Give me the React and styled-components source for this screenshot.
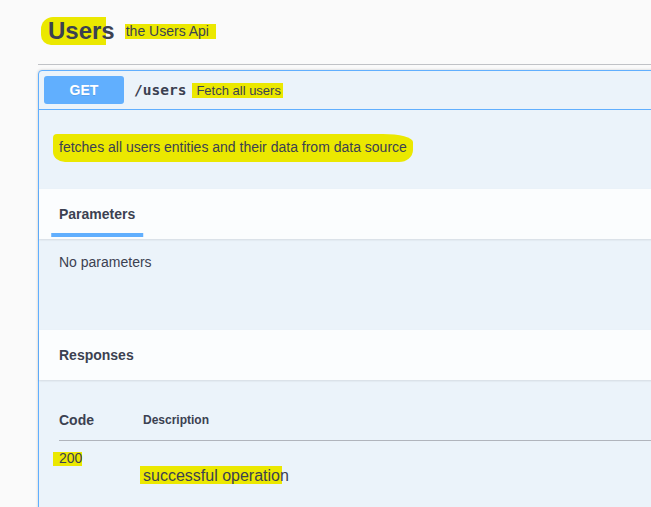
import styled, { createGlobalStyle } from 'styled-components';

const GlobalStyle = createGlobalStyle`
  html, body {
    margin: 0;
    padding: 0;
    background: #fafafa;
    overflow: hidden;
  }
  body {
    font-family: "Liberation Sans", Arial, sans-serif;
    color: #3b4151;
  }
`;

const HL = '#ebe800';

const Page = styled.div`
  width: 1400px;
  padding: 0 0 0 38px;
`;

const TagHeading = styled.h4`
  display: flex;
  align-items: center;
  margin: 0 0 5px;
  padding: 17px 20px 19px 10px;
  border-bottom: 1px solid rgba(59, 65, 81, 0.3);
  font-size: 24px;
  line-height: 28px;
  font-weight: 700;
`;

const TagName = styled.span`
  margin-left: -7px;
  padding-left: 7px;
  background: linear-gradient(${HL}, ${HL}) no-repeat left center;
  background-size: 88% 100%;
  border-radius: 12px 6px 4px 10px;
`;

const TagDesc = styled.small`
  font-size: 14px;
  font-weight: 400;
  line-height: 15px;
  margin-left: 10px;
  padding: 0 7px 0 1px;
  background: ${HL};
`;

const OpBlock = styled.div`
  border: 1px solid #61affe;
  border-radius: 4px;
  background: #ebf3fa;
  box-shadow: 0 0 3px rgba(0, 0, 0, 0.19);
`;

const Summary = styled.div`
  display: flex;
  align-items: center;
  padding: 5px;
  border-bottom: 1px solid #61affe;
`;

const Method = styled.span`
  display: inline-block;
  min-width: 80px;
  height: 28px;
  line-height: 28px;
  box-sizing: border-box;
  text-align: center;
  border-radius: 3px;
  background: #61affe;
  color: #fff;
  font-size: 14px;
  font-weight: 700;
  text-shadow: 0 1px 0 rgba(0, 0, 0, 0.1);
`;

const Path = styled.span`
  padding: 0 0 0 10px;
  font-family: "DejaVu Sans Mono", "Liberation Mono", monospace;
  font-size: 14.5px;
  font-weight: 700;
`;

const SummaryText = styled.span`
  margin-left: 6px;
  padding: 0 2px 0 4px;
  font-size: 13px;
  line-height: 15px;
  background: ${HL};
`;

const Description = styled.div`
  padding: 15px 20px 19px;
  font-size: 14px;

  p {
    margin: 14px 0;
    line-height: 17px;
  }
`;

const Scribble = styled.span`
  padding: 5px 6px 7px 6px;
  margin-left: -6px;
  background: ${HL};
  border-radius: 4px 30px 14px 12px / 4px 8px 12px 10px;
`;

const SectionHeader = styled.div`
  display: flex;
  align-items: center;
  box-sizing: border-box;
  min-height: 50px;
  padding: 8px 20px;
  background: rgba(255, 255, 255, 0.8);
  box-shadow: 0 1px 2px rgba(0, 0, 0, 0.1);
`;

const SectionTitle = styled.h4`
  position: relative;
  margin: 0;
  font-size: 14px;
  line-height: 16px;
  font-weight: 700;

  ${(p) =>
    p.$tab &&
    `
    &::after {
      content: '';
      position: absolute;
      left: 50%;
      bottom: -15px;
      width: 120%;
      height: 4px;
      transform: translateX(-50%);
      background: #61affe;
    }
  `}
`;

const ParamsBody = styled.div`
  box-sizing: border-box;
  min-height: 91px;
  padding: 15px 20px 0;
  font-size: 14px;
  line-height: 17px;
`;

const ResponsesBody = styled.div`
  padding: 20px 20px 40px;
`;

const Table = styled.table`
  width: 100%;
  border-collapse: collapse;
`;

const HeadCell = styled.td`
  padding: 12px 0 12px;
  border-bottom: 1px solid #b0b4bc;
  font-size: ${(p) => (p.$small ? '12px' : '14px')};
  font-weight: 700;
  line-height: 16px;
  width: ${(p) => (p.$w ? `${p.$w}px` : 'auto')};
  vertical-align: middle;
`;

const Cell = styled.td`
  padding: ${(p) => (p.$top ? `${p.$top}px` : '9px')} 0 0;
  vertical-align: top;
  font-size: ${(p) => (p.$size ? `${p.$size}px` : '14px')};
  line-height: ${(p) => (p.$size ? '18px' : '16px')};
`;

const Code = styled.span`
  margin-left: -6px;
  padding: 0 0 0 6px;
  background: linear-gradient(${HL}, ${HL}) no-repeat left 2px;
  background-size: 100% 14px;
`;

const Partial = styled.span`
  margin-left: -3px;
  padding: 1px 0 0 3px;
  background: linear-gradient(${HL}, ${HL}) no-repeat left top;
  background-size: 142px 100%;
`;

export default function App() {
  return (
    <>
      <GlobalStyle />
      <Page>
        <TagHeading>
          <TagName>Users</TagName>
          <TagDesc>the Users Api</TagDesc>
        </TagHeading>
        <OpBlock>
          <Summary>
            <Method>GET</Method>
            <Path>/users</Path>
            <SummaryText>Fetch all users</SummaryText>
          </Summary>
          <Description>
            <p>
              <Scribble>fetches all users entities and their data from data source</Scribble>
            </p>
          </Description>
          <SectionHeader>
            <SectionTitle $tab>Parameters</SectionTitle>
          </SectionHeader>
          <ParamsBody>No parameters</ParamsBody>
          <SectionHeader>
            <SectionTitle>Responses</SectionTitle>
          </SectionHeader>
          <ResponsesBody>
            <Table>
              <thead>
                <tr>
                  <HeadCell $w={84}>Code</HeadCell>
                  <HeadCell $small>Description</HeadCell>
                </tr>
              </thead>
              <tbody>
                <tr>
                  <Cell>
                    <Code>200</Code>
                  </Cell>
                  <Cell $top={26} $size={16}>
                    <Partial>successful operation</Partial>
                  </Cell>
                </tr>
              </tbody>
            </Table>
          </ResponsesBody>
        </OpBlock>
      </Page>
    </>
  );
}
